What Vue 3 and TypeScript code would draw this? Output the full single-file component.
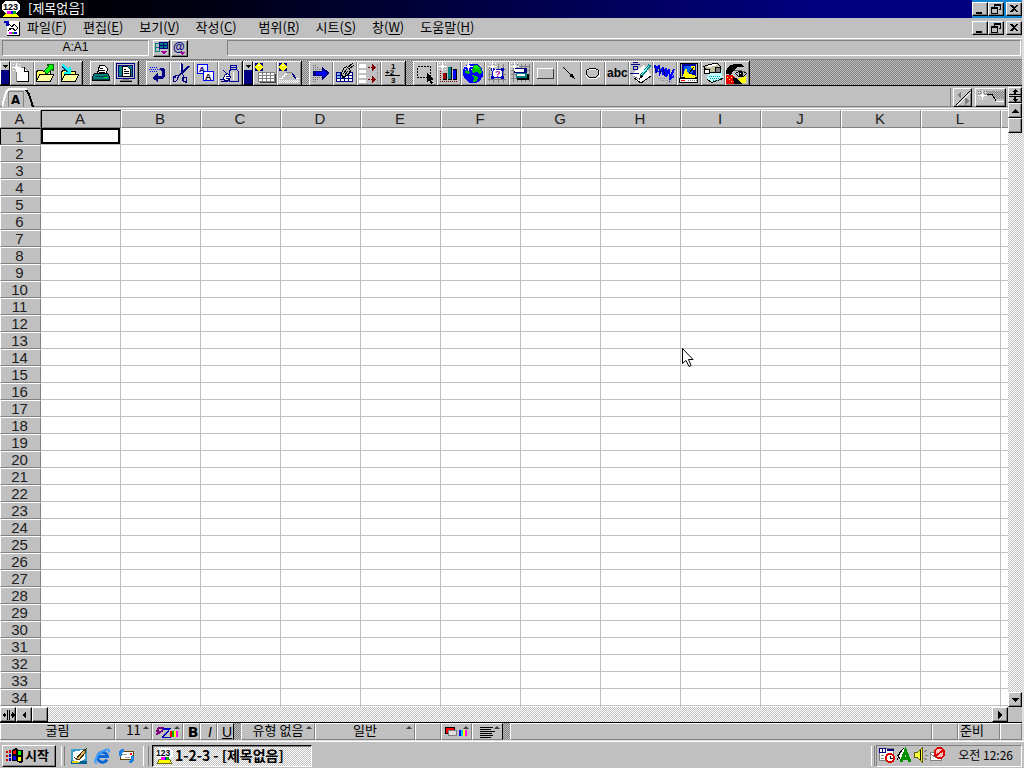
<script setup lang="ts">
import { ref } from 'vue'

interface Shape {
  d: string
  fill?: string
  stroke?: string
  width?: number
  dash?: string
}
interface Label {
  x: number
  y: number
  size: number
  text: string
  fill: string
}
interface Icon {
  name: string
  shapes: Shape[]
  labels?: Label[]
}

const f = (d: string, fill: string): Shape => ({ d, fill })
const s = (d: string, stroke: string, width = 1, dash?: string): Shape => ({ d, stroke, width, dash })
const fs = (d: string, fill: string, stroke: string): Shape => ({ d, fill, stroke, width: 1 })

const sparkle = (x: number, y: number): Shape =>
  f(
    `M${x} ${y - 4}h1v9h-1zM${x - 4} ${y}h9v1h-9zM${x - 1} ${y - 1}h3v3h-3zM${x - 3} ${y - 3}h1v1h-1zM${x + 3} ${y - 3}h1v1h-1zM${x - 3} ${y + 3}h1v1h-1zM${x + 3} ${y + 3}h1v1h-1z`,
    '#fff',
  )
const star: Shape[] = [
  f('M2 2h8v8H2z', '#000080'),
  f('M5 2h2v1h1v1h1v1h1v2H9v1H8v1H7v1H5V9H4V8H3V7H2V5h1V4h1V3h1z', '#ffff00'),
  f('M5 4h2v1H5z', '#fff'),
]

const menus = [
  { text: '파일', key: 'F' },
  { text: '편집', key: 'E' },
  { text: '보기', key: 'V' },
  { text: '작성', key: 'C' },
  { text: '범위', key: 'R' },
  { text: '시트', key: 'S' },
  { text: '창', key: 'W' },
  { text: '도움말', key: 'H' },
]

const fileIcons: Icon[] = [
  { name: '새로 만들기', shapes: [fs('M6.500 6.500h8l4 4v10h-12z', '#fff', '#808080'), s('M7 20.500h12M18.500 11v10M14.500 6v4.500h4', '#000'), sparkle(6, 6)] },
  { name: '열기', shapes: [fs('M2.500 19.500v-9l2-1h4l1 1h7v9z', '#ffff60', '#000'), fs('M5.500 13.500h14l-3 7h-14z', '#ffffa0', '#000'), fs('M10.500 9.500l4-4-1-2h6v6l-2-1-4 4h-2z', '#00ff00', '#006000')] },
  { name: '저장', shapes: [fs('M3.500 19.500v-9l2-1h4l1 1h7v9z', '#ffff60', '#000'), fs('M6.500 13.500h14l-3 7h-14z', '#ffffa0', '#000'), s('M5 5l6 6', '#004080', 4), s('M5 4l7 7M12 6v6H6', '#00ffff', 2)] },
]
const printIcons: Icon[] = [
  { name: '인쇄', shapes: [fs('M7.500 12.500l2-8h5l3 3-1 5z', '#fff', '#000'), s('M10 7.500h3M9 9.500h6M9 11.500h6', '#000'), fs('M4.500 12.500h13l2 3v4h-17v-4z', '#008080', '#000'), f('M5 15h12v1H5zM3 18h16v1H3z', '#004040'), f('M14 16h3v1h-3z', '#00ff00')] },
  { name: '미리보기', shapes: [fs('M2.500 2.500h18v15h-18z', '#c0c0c0', '#000080'), fs('M4.500 4.500h14v11h-14z', '#008080', '#000080'), fs('M8.500 5.500h5l3 3v7h-8z', '#fff', '#000'), s('M10 8.500h2M10 10.500h5M10 12.500h5', '#000'), f('M9 18h6v1h3v2H6v-2h3z', '#808080'), s('M6 20.500h12', '#000')] },
]
const editIcons: Icon[] = [
  { name: '실행 취소', shapes: [s('M3 8.500h11M4 6.500h3M8 6.500h3M4 10.500h3M8 10.500h3', '#0000ff', 1, '1 1'), f('M14 7h3l2 2v6l-2 3h-5v3l-6-4 6-5v3h3l1-1v-3l-2-2z', '#000080')] },
  { name: '잘라내기', shapes: [s('M11.500 2v10l-3 3M12.500 3v9M19.500 5l-7 7-5 3M18.500 5l-6 6M12 12l2 4', '#000080'), s('M3.500 15.500l3-1h2l-1 4-2 2h-2zM4.500 16.500l2-1M13.500 16.500h3v4h-3zM12.500 16v4M15 21h2', '#000080'), s('M10.500 3v6', '#fff')] },
  { name: '복사', shapes: [fs('M3.500 3.500h10v9h-10z', '#e8e8ff', '#0000ff'), fs('M9.500 10.500h10v9h-10z', '#fff', '#0000ff')], labels: [{ x: 5, y: 11, size: 8, text: 'A', fill: '#000080' }, { x: 11, y: 19, size: 9, text: 'A', fill: '#000' }] },
  { name: '붙여넣기', shapes: [fs('M12.500 4.500h6v4l2 2v10h-9v-10l1-2z', '#c0c0c0', '#0000a0'), s('M13 6.500h6M13 8.500h6', '#0000a0'), fs('M5.500 16.500l2-3 2-1 3 3-1 3-2 1h-3z', '#fff', '#000080'), s('M8 15.500h4M8 17.500h3M9 13l-4-4M2 18.500h4M3 20.500h7', '#000080'), s('M15.500 11v8', '#fff')] },
]
const newIcons: Icon[] = [
  { name: '새 표', shapes: [...star, f('M7 13h16v9H7z', '#404040'), f('M5 11h17v10H5z', '#808080'), f('M6 12h3v2H6zM10 12h3v2h-3zM14 12h3v2h-3zM18 12h3v2h-3zM6 15h3v2H6zM10 15h3v2h-3zM14 15h3v2h-3zM18 15h3v2h-3zM6 18h3v2H6zM10 18h3v2h-3zM14 18h3v2h-3zM18 18h3v2h-3z', '#fff')] },
  { name: '새 그림', shapes: [...star, s('M2 17.500h3v-2h2v-2h2v-2h6', '#fff'), s('M9 11.500h6', '#808080'), s('M15.500 12v2M16.500 13v3M17.500 14v3M18.500 16v2', '#000080'), s('M19 17.500h3', '#fff'), s('M2 19.500h20M3 20.500h19M2 21.500h20', '#fff', 1, '1 1')] },
]
const rangeIcons: Icon[] = [
  { name: '이동', shapes: [s('M4 4.500h3M4 6.500h6M4 8.500h9M4 14.500h12M4 16.500h9M4 18.500h6M4 20.500h3', '#707070', 1, '1 1'), f('M4 10h9V6l8 6-8 7v-4H4z', '#000080'), f('M7 11h7V9l4 3-4 4v-2H7z', '#0000ff')] },
  { name: '서식 복사', shapes: [f('M3 11h17v10H3z', '#fff'), f('M3 11h9v7H3z', '#80c0ff'), s('M3 11.500h17M3 14.500h17M3 17.500h17M3 20.500h17M3.500 11v10M7.500 11v10M11.500 11v10M15.500 11v10M19.500 11v10', '#000080'), fs('M8.500 12.500l2-5 3-2 4 4-2 4-6 3z', '#c0c0c0', '#000'), s('M14 7l6-5M16 8l5-4M10 13l4-5M12 14l3-4', '#000')] },
  { name: '줄 삽입', shapes: [f('M2 3h7v4H2zM2 9h7v3H2zM2 14h7v3H2zM2 19h7v3H2z', '#fff'), s('M11 6.500h5M11 18.500h5', '#800000', 1, '2 1'), f('M15 3l4 3.500-4 4zM15 15l4 3.500-4 4z', '#800000'), s('M20.500 3v19', '#808080', 1, '1 1')] },
  { name: '합계', shapes: [s('M4 14.500h15', '#000')], labels: [{ x: 10, y: 8, size: 8, text: '1', fill: '#000' }, { x: 4, y: 14, size: 8, text: '+2', fill: '#000' }, { x: 10, y: 22, size: 8, text: '3', fill: '#000' }] },
]
const drawIcons: Icon[] = [
  { name: '선택', shapes: [s('M4.500 5.500h13v11h-13z', '#000', 1, '2 1'), f('M14 12l7 6-3 1 2 3-2 1-2-4-2 2z', '#000')] },
  { name: '차트', shapes: [s('M3.500 10v10.500M3 20.500h18', '#800000', 1, '1 1'), f('M6 12h4v7H6zM11 6h4v13h-4zM16 8h4v11h-4z', '#000'), f('M6 12h3v6H6z', '#a00000'), f('M11 6h3v12h-3z', '#008080'), f('M16 9h3v9h-3z', '#0000ff'), sparkle(5, 5)] },
  { name: '지도', shapes: [f('M8 3h8l4 3 2 5v4l-3 5-4 2H9l-4-3-3-5v-5l2-4z', '#0000ff'), f('M13 4l4 0 3 4 1 4-3 1-2-2-4 1-1-3zM5 9l4 2-1 2-4-1zM11 14l4 1 2 2-2 4-3 0 1-4z', '#00c000'), f('M13 5l4 1-1 2-3-1z', '#00ff00'), sparkle(7, 5)] },
  { name: '쿼리', shapes: [s('M4.500 5v15M8.500 3v19M13.500 3v19M18.500 3v19M3 8.500h18M3 13.500h18M3 18.500h18', '#808080'), fs('M7.500 8.500h10v8h-10z', '#fff', '#0000c0'), f('M6 7h3v3H6zM16 7h3v3h-3zM6 15h3v3H6zM16 15h3v3h-3z', '#0000c0'), sparkle(7, 5)], labels: [{ x: 10, y: 16, size: 9, text: '?', fill: '#a000a0' }] },
  { name: '도구', shapes: [s('M4.500 3v18M8.500 3v18M12.500 3v18M16.500 3v18M20.500 3v18M2 5.500h19M2 9.500h19M2 13.500h19M2 17.500h19', '#808080'), f('M5 7h13v5H5z', '#000080'), f('M6 8h9v3H6z', '#fff'), f('M8 13h12v6H8z', '#000'), f('M7 12h11v5H7z', '#008080'), f('M8 13h8v2H8z', '#fff'), sparkle(5, 5)] },
  { name: '단추', shapes: [f('M4 8h17v10H4z', '#404040'), f('M4 7h16v10H4z', '#fff'), f('M5 8h15v9H5z', '#c0c0c0')] },
  { name: '화살표', shapes: [s('M6.500 6.500l9 9', '#000'), f('M18 18l-6-3 3-3z', '#000')] },
  { name: '타원', shapes: [s('M8 8.500h7l3 2v5l-3 2H8l-3-2v-5z', '#fff'), s('M8.500 7.500h6l3 2v4l-3 3h-6l-3-3v-4z', '#000')] },
  { name: '텍스트', shapes: [], labels: [{ x: 2, y: 16, size: 12, text: 'abc', fill: '#000' }] },
  { name: '그리기', shapes: [f('M4 12l11-8 7 10-11 8-6-4z', '#fff'), s('M5 17l7 5 10-7', '#000'), s('M5 15l7 5', '#606060', 1, '1 1'), s('M2 3.500h9M4 1.500h5M1 12.500h9', '#000080'), s('M4.500 5.500h4v3h-4z', '#000080'), s('M12 15l9-11', '#008080', 3), s('M12 14l8-9', '#80ffff'), f('M10 18l2-4 2 2z', '#000')] },
  { name: '워드아트', shapes: [s('M2 4l3 7M3 12l3-8 1 8 3-6 0 8 3-7 0 9 3-8 1 9 4-9M16 19l5-4', '#0000ff', 2), s('M1 5l3 7M6 5l2 7M10 7l2 8', '#000080'), s('M5 17.500h8M8 19.500h12M14 21.500h5', '#909090', 1, '1 1')] },
  { name: '통신', shapes: [fs('M3.500 2.500h17v14h-17z', '#c0c0c0', '#000'), f('M5 3h14v12H5z', '#0000a0'), f('M7 5h9v7H7z', '#0060ff'), f('M9 7l2 5 8 3-3 3H9l-3-4zM14 5h4v4h-3z', '#ffff00'), s('M12 12l5-6', '#000'), fs('M2.500 17.500h18v4h-18z', '#fff', '#000'), f('M4 19h4v1H4z', '#f00'), s('M11 19.500h9', '#808080', 1, '1 1')] },
  { name: '비디오', shapes: [f('M7 12l13-6 2 12-11 4-5-4z', '#c0ffff'), s('M6 18.500l5 3 11-4', '#000'), s('M8 15.500h12M9 17.500h11M12 19.500h6', '#00a0a0', 1, '1 1'), fs('M2.500 5.500l10-3h4l3 3v5l-11 1-3-2z', '#c0c0a0', '#000'), f('M5 5l8-2h3l-1 2-8 1z', '#fff'), fs('M14.500 6.500h5v5h-5z', '#808080', '#000'), fs('M3.500 8.500h5v4h-5z', '#fff', '#000')] },
  { name: '이미지', shapes: [f('M1 14h6l6 5-2 4H1z', '#f00000'), f('M12 18l9-3v7h-9z', '#ffff00'), f('M8 16l5 2 4 5H9z', '#000'), f('M1 10l3-5 5-2h7l4 3-7 0-4 3-3 5-5-1z', '#000'), fs('M10.500 12.500l3-2h5l3 2-3 3h-5z', '#c0c0c0', '#000'), f('M14 11h4v4h-4z', '#000'), f('M15 12h1v1h-1z', '#fff'), s('M9 9.500h5l6 1', '#606060'), f('M2 16h1v1H2zM4 18h1v1H4zM6 16h1v1H6zM6 20h1v1H6z', '#ffff00')] },
]

const groups: { icons: Icon[]; handle: boolean; gap: boolean }[] = [
  { icons: fileIcons, handle: true, gap: false },
  { icons: printIcons, handle: false, gap: true },
  { icons: editIcons, handle: false, gap: true },
  { icons: newIcons, handle: true, gap: false },
  { icons: rangeIcons, handle: false, gap: true },
  { icons: drawIcons, handle: false, gap: true },
]

const columns = ['A', 'B', 'C', 'D', 'E', 'F', 'G', 'H', 'I', 'J', 'K', 'L']
const rows = Array.from({ length: 34 }, (_, i) => i + 1)
const cellRef = ref('A:A1')
const contents = ref('')
</script>

<template>
  <div class="desktop">
    <div class="window">
      <header class="title">
        <svg class="logo" width="18" height="18" viewBox="0 0 18 18">
          <path d="M3 1h12l3 4v4l-3 4H3L0 9V5z" fill="#fff" />
          <path d="M4 13h10l3 4H1z" fill="#ffff00" />
          <path d="M5 11h4v3H5z" fill="#f0f" /><path d="M9 11h2v3H9z" fill="#00f" /><path d="M11 11h3v3h-3z" fill="#0a0" />
          <text x="1" y="10" class="logo-text">123</text>
        </svg>
        <span class="title-text">[제목없음]</span>
        <div class="controls blue">
          <button class="raised" aria-label="최소화"><svg width="14" height="12"><path d="M3 9h6v2H3z" /></svg></button>
          <button class="raised" aria-label="이전 크기로"><svg width="14" height="12"><path d="M5 1h7v6h-2V6h1V3H6v1H5zM2 4h7v7H2zM3 6v4h5V6z" fill-rule="evenodd" /></svg></button>
          <button class="raised last" aria-label="닫기"><svg width="14" height="12"><path d="M3 2h2l2 2 2-2h2L8 5.500 11 9H9L7 7 5 9H3l3-3.500z" /></svg></button>
        </div>
      </header>

      <nav class="menu">
        <svg class="doc-icon" width="16" height="16" viewBox="0 0 16 16">
          <path d="M3 1h12v14H3z" fill="#fff" /><path d="M3 15.500h13M15.500 2v14" stroke="#000" />
          <path d="M0 1h5v5H2V3H0z" fill="#0000c0" />
          <path d="M5 4l3 3 2-3 4 4M5 8h4l2 3 3-3M4 11l4-3" stroke="#000" fill="none" />
          <path d="M5 12h3v2H5z" fill="#f0f" /><path d="M8 12h2v2H8z" fill="#0a0" /><path d="M10 12h3v2h-3z" fill="#00f" />
        </svg>
        <button v-for="m in menus" :key="m.key" :class="['menu-item', { wide: m.key === 'R' }]">{{ m.text }}(<u>{{ m.key }}</u>)</button>
        <div class="controls">
          <button class="raised" aria-label="문서 최소화"><svg width="14" height="12"><path d="M3 9h6v2H3z" /></svg></button>
          <button class="raised" aria-label="문서 이전 크기로"><svg width="14" height="12"><path d="M5 1h7v6h-2V6h1V3H6v1H5zM2 4h7v7H2zM3 6v4h5V6z" fill-rule="evenodd" /></svg></button>
          <button class="raised last" aria-label="문서 닫기"><svg width="14" height="12"><path d="M3 2h2l2 2 2-2h2L8 5.500 11 9H9L7 7 5 9H3l3-3.500z" /></svg></button>
        </div>
      </nav>

      <div class="edit-line">
        <input v-model="cellRef" class="name-box" aria-label="셀 주소" />
        <button class="raised nav-btn" aria-label="이름 탐색">
          <svg width="15" height="15" viewBox="0 0 15 15"><path d="M1.500 2.500h4v8h-4zM1 6.500h5" stroke="#008080" fill="none" /><path d="M5 1h9v7H5z" fill="#000080" /><path d="M6 2h3v2H6zM10 2h3v2h-3zM6 5h3v2H6zM10 5h3v2h-3z" fill="#008080" /><path d="M7 10h6l-3 4z" fill="#a000a0" /></svg>
        </button>
        <button class="raised nav-btn" aria-label="함수">
          <svg width="15" height="15" viewBox="0 0 15 15"><text x="1" y="10" class="at">@</text><path d="M7 11h6l-3 3z" fill="#a000a0" /></svg>
        </button>
        <input v-model="contents" class="contents-box" aria-label="셀 내용" />
      </div>

      <div class="toolbar">
        <template v-for="(g, gi) in groups" :key="gi">
          <button v-if="g.handle" class="handle" aria-label="도구 모음 메뉴"><svg width="8" height="8"><path d="M2 3h5L4.500 6z" /></svg></button>
          <span v-if="g.gap" class="gap"></span>
          <div class="group">
            <button v-for="icon in g.icons" :key="icon.name" class="tool" :aria-label="icon.name">
              <svg width="24" height="24" viewBox="0 0 24 24">
                <path v-for="(p, i) in icon.shapes" :key="i" :d="p.d" :fill="p.fill ?? 'none'" :stroke="p.stroke ?? 'none'" :stroke-width="p.width ?? 0" :stroke-dasharray="p.dash" />
                <text v-for="l in icon.labels ?? []" :key="l.y" :x="l.x" :y="l.y" :font-size="l.size" :fill="l.fill">{{ l.text }}</text>
              </svg>
            </button>
          </div>
        </template>
      </div>

      <main class="work">
        <section class="sheet">
          <div class="tab-row">
            <button class="tab" aria-label="시트 A">
              <svg width="32" height="20" viewBox="0 0 32 20">
                <path d="M0 19l4-15 3-3h18" stroke="#fff" stroke-width="2" fill="none" />
                <path d="M6.500 19V3.500h15V19" stroke="#808080" fill="none" />
                <path d="M24 2l3 4 4 13" stroke="#000" stroke-width="2" fill="none" />
                <text x="9" y="16" class="tab-text">A</text>
              </svg>
            </button>
            <div class="tab-fill"></div>
            <button class="raised tab-btn" aria-label="시트 이동"><svg width="16" height="16"><path d="M2 5l4-4v8zM14 11l-4-4v8z" fill="#808080" /><path d="M1 15L15 1" stroke="#000" /><path d="M2 16L16 2" stroke="#fff" /></svg></button>
            <button class="raised tab-btn long" aria-label="새 시트">
              <svg width="28" height="16"><path d="M1 1.500h26M2 2.500h25M1 3.500h26M2 4.500h25M1 5.500h12M17 5.500h10M18 6.500h9M19 7.500h8M20 8.500h7" stroke="#808080" stroke-dasharray="1 1" /><path d="M1 5h9v1H1zM5 1h1v9H5zM4 4h3v3H4zM2 2h1v1H2zM8 2h1v1H8zM2 8h1v1H2zM8 8h1v1H8zM19 11h8v1h-8z" fill="#fff" /><path d="M10 4.500h5l4 6" stroke="#000" fill="none" /></svg>
            </button>
          </div>
          <div class="grid-wrap">
            <table class="grid">
              <colgroup><col class="head-col" /><col v-for="c in columns" :key="c" class="data-col" /><col class="data-col" /></colgroup>
              <thead>
                <tr><th scope="col">A</th><th v-for="(c, i) in columns" :key="c" scope="col" :class="{ current: i === 0 }">{{ c }}</th><th></th></tr>
              </thead>
              <tbody>
                <tr v-for="r in rows" :key="r"><th scope="row" :class="{ current: r === 1 }">{{ r }}</th><td v-for="(c, i) in columns" :key="c" :class="{ selected: r === 1 && i === 0 }"></td><td></td></tr>
                <tr><th></th><td v-for="c in columns" :key="c"></td><td></td></tr>
              </tbody>
            </table>
          </div>
        </section>
        <div class="v-scroll">
          <button class="raised split" aria-label="가로 나누기"><svg width="12" height="13"><path d="M6 0l3 3H7v2h5v1H0V5h5V3H3zM0 7h12v1H7v2h2l-3 3-3-3h2V8H0z" /></svg></button>
          <button class="raised" aria-label="위로"><svg width="12" height="12"><path d="M2 8h8L6 4z" /></svg></button>
          <button class="raised" aria-label="세로 위치"></button>
          <span class="track"></span>
          <button class="raised" aria-label="아래로"><svg width="12" height="12"><path d="M2 4h8L6 8z" /></svg></button>
        </div>
      </main>

      <div class="h-scroll">
        <button class="raised" aria-label="세로 나누기"><svg width="13" height="12"><path d="M0 6l3-3v2h1v2H3v2zM5 1h1v10H5zM7 1h1v10H7zM13 6l-3-3v2H9v2h1v2z" /></svg></button>
        <button class="raised" aria-label="왼쪽으로"><svg width="12" height="12"><path d="M8 2v8L4 6z" /></svg></button>
        <button class="raised" aria-label="가로 위치"></button>
        <span class="track"></span>
        <button class="raised" aria-label="오른쪽으로"><svg width="12" height="12"><path d="M4 2v8l4-4z" /></svg></button>
        <span class="corner"></span>
      </div>

      <footer class="status">
        <button class="cell font">굴림<i class="up"></i></button>
        <button class="cell size">11<i class="up"></i></button>
        <button class="cell icon" aria-label="글꼴 색">
          <svg width="28" height="14" viewBox="0 0 28 14"><path d="M10 3H5L3 6l2 2 4-3M4 8L2 10" stroke="#800080" stroke-width="2" fill="none" /><path d="M9 3h8l-8 9h8" stroke="#0000c0" fill="none" /><path d="M9 4h7l-8 8" stroke="#0000c0" fill="none" /><path d="M16 6h2v6h-2z" fill="#f00" /><path d="M18 6h2v6h-2z" fill="#0a0" /><path d="M20 6h2v6h-2z" fill="#ff0" /><path d="M22 6h2v6h-2z" fill="#f0f" /></svg><i class="up"></i>
        </button>
        <button class="cell letter"><b>B</b></button>
        <button class="cell letter"><em>I</em></button>
        <button class="cell letter under"><u>U</u></button>
        <span class="gap"></span>
        <button class="cell style">유형 없음<i class="up"></i></button>
        <button class="cell format">일반<i class="up"></i></button>
        <span class="cell blank"></span>
        <button class="cell icon" aria-label="배경색">
          <svg width="28" height="14" viewBox="0 0 28 14"><path d="M2.500 2.500h9v6h-9z" fill="#f00" stroke="#000" /><path d="M5.500 5.500h8v5h-8z" fill="#e0e0e0" stroke="#808080" /><path d="M16 5h2v6h-2z" fill="#00f" /><path d="M18 5h2v6h-2z" fill="#0cc" /><path d="M20 5h2v6h-2z" fill="#ff0" /><path d="M22 5h2v6h-2z" fill="#f0f" /></svg><i class="up"></i>
        </button>
        <button class="cell icon under" aria-label="맞춤">
          <svg width="28" height="14"><path d="M6 2.500h13M6 4.500h11M6 6.500h15M6 8.500h12M6 10.500h13M6 12.500h11" stroke="#000" /></svg><i class="up"></i>
        </button>
        <span class="gap"></span>
        <span class="cell message"></span>
        <span class="cell blank"></span>
        <span class="cell ready">준비</span>
        <span class="cell blank end"></span>
      </footer>
    </div>

    <footer class="taskbar">
      <button class="start">
        <svg width="17" height="16" viewBox="0 0 17 16"><path d="M0 4h2v2H0zM0 8h2v2H0zM0 12h2v2H0zM3 3h2v3H3z" fill="#d00000" /><path d="M3 7h2v3H3zM3 11h2v3H3z" fill="#0000c0" /><path d="M6 3l4-2 3 2h4v12l-3 1-4-2H6z" fill="#000" /><path d="M7 4l3-1v4H7z" fill="#f00" /><path d="M12 4h3v4h-3z" fill="#0f0" /><path d="M7 9h3v4H7z" fill="#00f" /><path d="M12 10h3v4h-3z" fill="#ff0" /></svg>
        시작
      </button>
      <span class="grip"></span>
      <div class="quick">
        <button aria-label="바탕 화면 보기"><svg width="16" height="16" viewBox="0 0 16 16"><path d="M0 1h16v15H0z" fill="#40a0c8" /><path d="M0 13h16v3H0z" fill="#006090" /><path d="M2 4l9-2 3 2v7l-6 3H4l-2-3z" fill="#fff" /><path d="M1 13l5 0 3 2H1z" fill="#e8d000" /><path d="M5 11l7-8 3-2-1 4-6 7z" fill="#e0b060" stroke="#403000" /><path d="M3 9l3 3" stroke="#404040" fill="none" /></svg></button>
        <button aria-label="Internet Explorer"><svg width="17" height="16" viewBox="0 0 17 16" class="smooth"><path d="M13 11.500a5 5 0 1 1 .500-3H5" stroke="#0868d8" stroke-width="3" fill="none" /><path d="M3 14.500C-1 16 2 7 8 3.500s8-2 6.500 1" stroke="#40a0ff" stroke-width="2" fill="none" /></svg></button>
        <button aria-label="메일"><svg width="17" height="16" viewBox="0 0 17 16"><path d="M2.500 3.500h13v8h-13z" fill="#fff" stroke="#604000" /><path d="M12 5h2v2h-2z" fill="#f00" /><path d="M4 6h5v1H4zM7 9h5v1H7z" fill="#a0a0a0" /><path d="M6 1H3L1 4v3H0l2 2 3-2H4V5l2-2zM11 15h3l2-3V9h1l-3-2-2 2h1v2l-2 2z" fill="#2080e0" /></svg></button>
      </div>
      <span class="grip double"></span>
      <button class="task">
        <svg width="17" height="17" viewBox="0 0 18 18"><path d="M3 1h12l3 4v4l-3 4H3L0 9V5z" fill="#fff" /><path d="M4 13h10l3 4H1z" fill="#ffff00" stroke="#606000" /><path d="M5 11h4v3H5z" fill="#f0f" /><path d="M9 11h2v3H9z" fill="#00f" /><path d="M11 11h3v3h-3z" fill="#0a0" /><text x="0" y="10" class="logo-text">123</text></svg>
        1-2-3 - [제목없음]
      </button>
      <span class="grip tray-grip"></span>
      <div class="tray">
        <svg width="16" height="16" viewBox="0 0 16 16"><path d="M.500 1.500h14v12H.500z" fill="#fff" stroke="#808080" /><path d="M0 1h7v5H0z" fill="#000080" /><path d="M1 2h2v3H1zM4 2h2v3H4z" fill="#fff" /><path d="M8 2h7v2H8z" fill="#000080" /><path d="M2 8h3v1H2zM8 6h5v1H8zM2 11h3v1H2z" fill="#808080" /><circle cx="11" cy="11" r="4" fill="#fff" stroke="#e00000" stroke-width="2" /><path d="M11.500 9v2.500h2" stroke="#000" fill="none" /></svg>
        <svg width="16" height="16" viewBox="0 0 16 16"><path d="M1.500 8.500l6-7 3 2-6 9z" fill="#fff" stroke="#000" /><path d="M1 13l3-7" stroke="#000" fill="none" /><path d="M5 15L9.500 4 14 15M7 11h6" stroke="#009000" stroke-width="3" fill="none" /></svg>
        <svg width="16" height="16" viewBox="0 0 16 16"><path d="M1.500 5.500h3l5-5v15l-5-5h-3z" fill="#ffff40" stroke="#606000" /><path d="M7.500 3v10" stroke="#000" /><path d="M11 5l3-2M12 8h3M11 11l3 2" stroke="#808080" /></svg>
        <svg width="16" height="16" viewBox="0 0 16 16"><path d="M.500 5.500h11v8H.500z" fill="#fff" stroke="#808080" /><path d="M1 7l5 4 5-4" stroke="#808080" fill="none" /><circle cx="9.500" cy="6" r="5" fill="#f8c0c0" stroke="#e00000" stroke-width="2" /><path d="M6 9l7-6" stroke="#e00000" stroke-width="2" /></svg>
        <time>오전 12:26</time>
      </div>
    </footer>

    <svg class="pointer" width="12" height="20" viewBox="0 0 12 20"><path d="M.500.500v15l3.500-3 3 6 2-1-2.500-6h4.500z" fill="#fff" stroke="#000" /></svg>
  </div>
</template>

<style>
html,
body {
  margin: 0;
  background: #c0c0c0;
}
</style>

<style scoped>
.desktop {
  position: relative;
  display: flex;
  flex-direction: column;
  height: 100vh;
  min-height: 400px;
  overflow: hidden;
  background: #c0c0c0;
  color: #000;
  font: 13px/16px "Noto Sans CJK KR", "Liberation Sans", sans-serif;
}
.desktop * { box-sizing: border-box; }
svg { display: block; flex: none; shape-rendering: crispEdges; }
.smooth { shape-rendering: auto; }
button, input {
  margin: 0;
  padding: 0;
  border: 0;
  border-radius: 0;
  background: #c0c0c0;
  color: inherit;
  font: inherit;
}
.window {
  flex: 1;
  min-height: 0;
  display: flex;
  flex-direction: column;
  border-right: 2px solid #dfdfdf;
}
.raised {
  display: flex;
  align-items: center;
  justify-content: center;
  border: 1px solid;
  border-color: #fff #000 #000 #fff;
  box-shadow: inset -1px -1px 0 #808080;
  overflow: hidden;
}
.title {
  flex: none;
  display: flex;
  align-items: center;
  height: 18px;
  padding-left: 2px;
  background: linear-gradient(90deg, #000 0%, #000010 18%, #000080 80%);
  color: #fff;
}
.title-text { flex: 1; padding: 0 0 2px 8px; }
.logo-text { font: bold 9px "Liberation Sans", sans-serif; fill: #000; }
.controls { display: flex; align-items: center; height: 18px; margin-left: auto; }
.controls.blue { background: #1084d0; }
.controls .raised { width: 16px; height: 14px; }
.controls .last { margin-left: 2px; }
.menu { flex: none; display: flex; align-items: center; height: 20px; }
.doc-icon { margin: 0 7px 0 4px; }
.menu-item { margin-right: 16px; padding-bottom: 2px; white-space: nowrap; }
.menu-item.wide { margin-left: 6px; }
.menu-item u { text-underline-offset: 2px; }
.edit-line {
  flex: none;
  display: flex;
  align-items: flex-start;
  height: 21px;
  padding: 1px 1px 0 2px;
  border-top: 1px solid #fff;
}
.name-box, .contents-box { height: 16px; border: 1px solid; border-color: #808080 #fff #fff #808080; }
.name-box { width: 147px; margin-right: 4px; padding-bottom: 3px; text-align: center; font: 12px/12px "Liberation Sans", sans-serif; }
.nav-btn { width: 17px; height: 17px; margin-right: 1px; }
.contents-box { flex: 1; min-width: 0; margin-left: 38px; }
.at { font: bold 12px "Liberation Sans", sans-serif; fill: #000080; }
.toolbar {
  flex: none;
  display: flex;
  height: 27px;
  padding-top: 1px;
  border-top: 1px solid #808080;
  border-bottom: 1px solid #000;
  background: repeating-conic-gradient(#808080 0 25%, #c0c0c0 0 50%) 0 0 / 2px 2px;
}
.handle {
  display: flex;
  align-items: flex-start;
  width: 10px;
  border: 1px solid;
  border-color: #fff #000 #000 #fff;
  background: linear-gradient(#c0c0c0 8px, #000080 8px);
}
.group { display: flex; border-right: 1px solid #000; }
.gap { flex: none; width: 7px; background: repeating-conic-gradient(#808080 0 25%, #c0c0c0 0 50%) 0 0 / 2px 2px; }
.tool { width: 24px; height: 24px; overflow: hidden; box-shadow: inset 1px 1px 0 #fff, inset -1px -1px 0 #808080; }
.tool text { font-family: "Liberation Sans", sans-serif; font-weight: bold; }
.work { flex: 1; min-height: 0; display: flex; }
.sheet { flex: 1; min-width: 0; display: flex; flex-direction: column; }
.tab-row {
  flex: none;
  display: flex;
  height: 24px;
  padding: 2px 2px 0 2px;
  background: linear-gradient(#c0c0c0 20px, #808080 20px 21px, #c0c0c0 21px 22px, #fff 22px 23px, #c0c0c0 23px);
}
.tab { height: 20px; }
.tab-text { font: bold 13px "DejaVu Sans Condensed", "DejaVu Sans", sans-serif; }
.tab-fill { flex: 1; height: 19px; border-right: 1px solid #808080; }
.tab-btn { width: 19px; height: 19px; margin-left: 2px; }
.tab-btn.long { width: 31px; margin: 0 0 0 3px; }
.grid-wrap { flex: 1; min-height: 0; overflow: hidden; background: #fff; }
.grid { width: 1081px; table-layout: fixed; border-collapse: separate; border-spacing: 0; font: 15px/15px "Liberation Sans", sans-serif; }
.head-col { width: 41px; }
.data-col { width: 80px; }
.grid th {
  height: 17px;
  padding: 0 2px 0 0;
  border: 1px solid;
  border-color: #fff #808080 #808080 #fff;
  background: #c0c0c0;
  color: #202020;
  font-weight: 400;
  line-height: 15px;
  text-align: center;
  vertical-align: top;
}
.grid thead th { height: 18px; }
.grid th.current { border-color: #000 #808080 #808080 #000; }
.grid td { height: 17px; padding: 0; border: solid #c0c0c0; border-width: 0 1px 1px 0; }
.grid td.selected { box-shadow: inset 0 0 0 2px #000; }
.track { flex: 1; background: repeating-conic-gradient(#fff 0 25%, #c0c0c0 0 50%) 0 0 / 2px 2px; }
.v-scroll { flex: none; display: flex; flex-direction: column; width: 14px; padding-top: 1px; }
.v-scroll .raised { flex: none; width: 14px; height: 15px; }
.v-scroll .split { height: 16px; }
.h-scroll { flex: none; display: flex; height: 16px; border-bottom: 1px solid #000; }
.h-scroll .raised { flex: none; width: 16px; }
.corner { width: 14px; }
.status { flex: none; display: flex; height: 17px; overflow: hidden; }
.cell {
  position: relative;
  flex: none;
  display: flex;
  align-items: center;
  justify-content: center;
  height: 17px;
  padding-bottom: 3px;
  border: 1px solid;
  border-color: #fff #808080 #808080 #fff;
  line-height: 12px;
  white-space: nowrap;
}
.font { width: 115px; }
.size { width: 37px; }
.icon { width: 31px; padding-bottom: 0; }
.letter { width: 17px; padding: 0 0 0 3px; font: 14px/14px "Liberation Sans", sans-serif; }
.letter b { font-family: "DejaVu Sans", sans-serif; }
.under { border-right-color: #000; }
.style { width: 74px; }
.format { width: 100px; }
.blank { width: 26px; }
.message { flex: 1; }
.ready { width: 42px; padding-left: 1px; justify-content: flex-start; }
.end { width: 22px; }
.up {
  position: absolute;
  top: 2px;
  right: 2px;
  border: solid transparent;
  border-width: 0 3px 3px;
  border-bottom-color: #404040;
}
.taskbar {
  flex: none;
  display: flex;
  align-items: center;
  height: 28px;
  padding: 2px 2px 0;
  border-top: 1px solid #dfdfdf;
  box-shadow: inset 0 1px 0 #fff;
}
.start {
  display: flex;
  align-items: center;
  gap: 2px;
  width: 54px;
  height: 22px;
  padding: 0 0 1px 3px;
  border: 1px solid;
  border-color: #fff #000 #000 #fff;
  box-shadow: inset -1px -1px 0 #808080;
  font-weight: bold;
  white-space: nowrap;
}
.grip { width: 4px; height: 20px; margin-left: 5px; border: solid; border-width: 0 1px; border-color: #fff #808080 #808080 #fff; }
.quick { display: flex; gap: 7px; margin-left: 6px; }
.grip.double { width: 6px; margin-left: 8px; }
.task {
  display: flex;
  align-items: center;
  gap: 2px;
  width: 160px;
  height: 22px;
  margin-left: 3px;
  padding: 0 0 1px 3px;
  border: 1px solid;
  border-color: #000 #fff #fff #000;
  box-shadow: inset 1px 1px 0 #808080;
  background: repeating-conic-gradient(#fff 0 25%, #c0c0c0 0 50%) 0 0 / 2px 2px;
  font-size: 14px;
  font-weight: bold;
  white-space: nowrap;
}
.tray-grip { margin-left: auto; }
.tray {
  display: flex;
  align-items: center;
  gap: 1px;
  height: 22px;
  margin-left: 1px;
  padding: 0 8px 1px 2px;
  border: 1px solid;
  border-color: #808080 #fff #fff #808080;
}
time { margin-left: 11px; font-size: 12px; white-space: nowrap; }
.pointer { position: absolute; top: 348px; left: 682px; shape-rendering: auto; }
</style>
